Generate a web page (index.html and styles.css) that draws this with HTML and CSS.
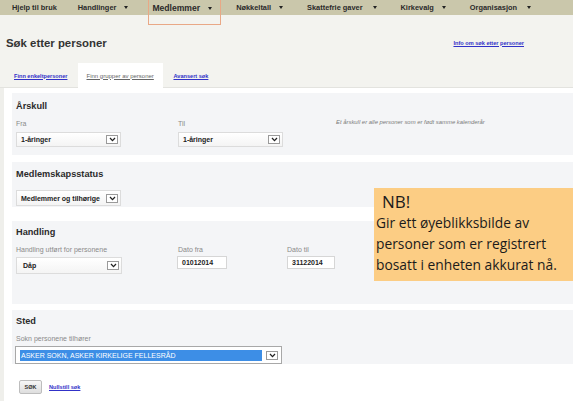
FILE: index.html
```html
<!DOCTYPE html>
<html lang="no">
<head>
<meta charset="utf-8">
<title>Søk etter personer</title>
<link rel="stylesheet" href="styles.css">
</head>
<body>
<nav class="topnav">
  <span class="nav-item nav-first">Hjelp til bruk</span>
  <span class="nav-item">Handlinger<i class="caret"></i></span>
  <span class="nav-item nav-active">Medlemmer<i class="caret"></i></span>
  <span class="nav-item">Nøkkeltall<i class="caret"></i></span>
  <span class="nav-item">Skattefrie gaver<i class="caret caret-wide"></i></span>
  <span class="nav-item">Kirkevalg<i class="caret"></i></span>
  <span class="nav-item">Organisasjon<i class="caret caret-wide"></i></span>
</nav>

<header class="pagehead">
  <div class="title-row">
    <h1>Søk etter personer</h1>
    <a class="info-link" href="#">Info om søk etter personer</a>
  </div>
  <div class="tabs">
    <a class="tab tab-link tab-first" href="#">Finn enkeltpersoner</a>
    <span class="tab tab-active">Finn grupper av personer</span>
    <a class="tab tab-link tab-last" href="#">Avansert søk</a>
  </div>
</header>

<main class="content">
  <section class="panel panel-arskull">
    <h2>Årskull</h2>
    <div class="fields">
      <div class="field field-fra">
        <div class="label">Fra</div>
        <div class="select sel-arskull"><span class="select-value">1-åringer</span><span class="select-arrow"><svg width="7" height="5" viewBox="0 0 7 5"><path d="M1 1 L3.5 3.6 L6 1" fill="none" stroke="#222" stroke-width="1.3"/></svg></span></div>
      </div>
      <div class="field field-til">
        <div class="label">Til</div>
        <div class="select sel-arskull"><span class="select-value">1-åringer</span><span class="select-arrow"><svg width="7" height="5" viewBox="0 0 7 5"><path d="M1 1 L3.5 3.6 L6 1" fill="none" stroke="#222" stroke-width="1.3"/></svg></span></div>
      </div>
      <div class="note">Et årskull er alle personer som er født samme kalenderår</div>
    </div>
  </section>

  <section class="panel panel-status">
    <h2>Medlemskapsstatus</h2>
    <div class="select sel-status"><span class="select-value">Medlemmer og tilhørige</span><span class="select-arrow"><svg width="7" height="5" viewBox="0 0 7 5"><path d="M1 1 L3.5 3.6 L6 1" fill="none" stroke="#222" stroke-width="1.3"/></svg></span></div>
  </section>

  <section class="panel panel-handling">
    <h2>Handling</h2>
    <div class="fields">
      <div class="field field-handling">
        <div class="label">Handling utført for personene</div>
        <div class="select sel-handling"><span class="select-value">Dåp</span><span class="select-arrow"><svg width="7" height="5" viewBox="0 0 7 5"><path d="M1 1 L3.5 3.6 L6 1" fill="none" stroke="#222" stroke-width="1.3"/></svg></span></div>
      </div>
      <div class="field field-datofra">
        <div class="label">Dato fra</div>
        <div class="input">01012014</div>
      </div>
      <div class="field field-datotil">
        <div class="label">Dato til</div>
        <div class="input input-narrow">31122014</div>
      </div>
    </div>
  </section>

  <section class="panel panel-sted">
    <h2>Sted</h2>
    <div class="label">Sokn personene tilhører</div>
    <div class="select sel-sted"><span class="select-value highlighted">ASKER SOKN, ASKER KIRKELIGE FELLESRÅD</span><span class="select-arrow"><svg width="7" height="5" viewBox="0 0 7 5"><path d="M1 1 L3.5 3.6 L6 1" fill="none" stroke="#222" stroke-width="1.3"/></svg></span></div>
  </section>

  <div class="actions">
    <button class="btn" type="button">SØK</button>
    <a class="reset-link" href="#">Nullstill søk</a>
  </div>
</main>

<aside class="nb-box">
  <p class="nb-title">NB!</p>
  <p class="nb-text">Gir ett øyeblikksbilde av personer som er registrert bosatt i enheten akkurat nå.</p>
</aside>
</body>
</html>
```

FILE: styles.css
```css
* { box-sizing: border-box; margin: 0; padding: 0; }

html, body { width: 573px; height: 401px; overflow: hidden; }

body {
  font-family: "Liberation Sans", Arial, sans-serif;
  background: #ffffff;
  color: #222;
  position: relative;
}

/* ---------- top navigation ---------- */
.topnav {
  height: 15px;
  background: #cac7ab;
  display: flex;
  align-items: stretch;
  padding-left: 12px;
  gap: 24px;
  position: relative;
  z-index: 2;
}

.nav-item {
  display: flex;
  align-items: center;
  font-size: 7.4px;
  font-weight: bold;
  color: #2a2a2a;
  white-space: nowrap;
}

.nav-first { margin-right: -3px; }

.caret {
  display: inline-block;
  width: 0;
  height: 0;
  border-left: 2.5px solid transparent;
  border-right: 2.5px solid transparent;
  border-top: 3.5px solid #222;
  margin-left: 8px;
}

.caret-wide { margin-left: 10px; }

.nav-active {
  font-size: 8.6px;
  position: relative;
  padding-top: 1px;
}

.nav-active::after {
  content: "";
  position: absolute;
  left: -4px;
  right: -9px;
  top: 0;
  height: 24px;
  border: 1px solid #e9a886;
  border-top: none;
}

/* ---------- page header ---------- */
.pagehead {
  background: #f3f3ef;
  height: 73px;
  border-bottom: 1px solid #e3e3df;
  display: flex;
  flex-direction: column;
}

.title-row {
  display: flex;
  justify-content: space-between;
  align-items: center;
  height: 14px;
  margin-top: 21px;
  padding-left: 6px;
  padding-right: 49px;
}

h1 {
  font-size: 11.4px;
  font-weight: bold;
  line-height: 14px;
  color: #333;
}

.info-link {
  font-size: 5.6px;
  font-weight: bold;
  color: #3131c8;
  text-decoration: underline;
  margin-top: -1px;
}

.tabs {
  display: flex;
  height: 25px;
  margin-top: 13px;
  flex-shrink: 0;
}

.tab {
  display: flex;
  align-items: center;
  white-space: nowrap;
  text-decoration: underline;
}

.tab-link {
  font-size: 5.6px;
  font-weight: bold;
  color: #3131c8;
}

.tab-first { margin-left: 14px; }

.tab-active {
  margin-left: 11px;
  width: 85px;
  padding-left: 8px;
  background: #ffffff;
  font-size: 6px;
  color: #666;
}

.tab-last { margin-left: 10px; }

/* ---------- content ---------- */
.content {
  border-left: 4px solid #efefeb;
  padding: 5px 0 0 8px;
  height: 313px;
}

.panel {
  background: #f4f5f7;
  padding-left: 4px;
}

h2 {
  font-size: 9.2px;
  font-weight: bold;
  line-height: 11px;
  color: #2b2b2b;
}

.label {
  font-size: 7px;
  line-height: 9px;
  color: #8a8a8a;
  white-space: nowrap;
}

.fields { display: flex; }

.select {
  display: flex;
  align-items: center;
  justify-content: space-between;
  background: linear-gradient(#ffffff, #f4f4f4);
  border: 1px solid #dcdcdc;
  padding-left: 4px;
  padding-right: 2px;
}

.select-value {
  font-size: 7px;
  font-weight: bold;
  color: #222;
  white-space: nowrap;
}

.select-arrow {
  width: 12px;
  height: 9px;
  border: 1px solid #9a9a9a;
  background: #fff;
  display: flex;
  align-items: center;
  justify-content: center;
}

.input {
  width: 50px;
  height: 13px;
  background: #fff;
  border: 1px solid #d6d6d6;
  font-size: 7px;
  font-weight: bold;
  line-height: 11px;
  padding-left: 4px;
  color: #222;
  margin-top: 2px;
}

.input-narrow { width: 48px; }

/* Årskull */
.panel-arskull { padding-top: 8px; padding-bottom: 8px; }
.panel-arskull .fields { margin-top: 7px; }
.field-fra { width: 162px; }
.field-til { width: 158px; }
.sel-arskull { width: 105px; height: 15px; margin-top: 4px; }
.note {
  font-size: 5.9px;
  font-style: italic;
  color: #7a7a7a;
  line-height: 7px;
  white-space: nowrap;
}

/* Medlemskapsstatus */
.panel-status { margin-top: 7px; padding-top: 7px; padding-bottom: 1px; }
.sel-status { width: 105px; height: 16px; margin-top: 10px; }

/* Handling */
.panel-handling { margin-top: 14px; padding-top: 6px; padding-bottom: 30px; }
.panel-handling .fields { margin-top: 7px; }
.field-handling { width: 162px; }
.field-datofra { width: 109px; }
.sel-handling { width: 106px; height: 17px; margin-top: 3px; padding-left: 6px; }
.field-datofra .input { margin-left: -1px; }

/* Sted */
.panel-sted { margin-top: 6px; padding-top: 6px; }
.panel-sted .label { margin-top: 7px; }
.sel-sted {
  width: 267px;
  height: 18px;
  margin-top: 3px;
  margin-left: -1px;
  border: 1px solid #a8a8a8;
  padding-left: 4px;
  padding-right: 3px;
  background: #fff;
}
.highlighted {
  background: #3d8ee6;
  color: #fff;
  font-weight: normal;
  font-size: 7px;
  width: 242px;
  line-height: 11px;
  padding-left: 1px;
}

/* actions */
.actions {
  display: flex;
  align-items: center;
  margin-top: 16px;
  padding-left: 7px;
}

.btn {
  width: 23px;
  height: 14px;
  border: 1px solid #bdbdbd;
  border-radius: 2px;
  background: linear-gradient(#f7f7f7, #dedede);
  font-family: "Liberation Sans", Arial, sans-serif;
  font-size: 5.5px;
  font-weight: bold;
  color: #333;
}

.reset-link {
  margin-left: 7px;
  font-size: 5.6px;
  font-weight: bold;
  color: #3131c8;
  text-decoration: underline;
}

/* ---------- NB callout (overlay) ---------- */
.nb-box {
  position: absolute;
  left: 374px;
  top: 188px;
  width: 200px;
  height: 93px;
  background: #fccd84;
  padding: 4px 0 0 2px;
  font-family: "Open Sans", "Noto Sans", sans-serif;
  color: #1b1b1b;
}

.nb-title {
  font-size: 17px;
  line-height: 20px;
  padding-left: 6px;
}

.nb-text {
  font-size: 13.8px;
  line-height: 21px;
}
```
